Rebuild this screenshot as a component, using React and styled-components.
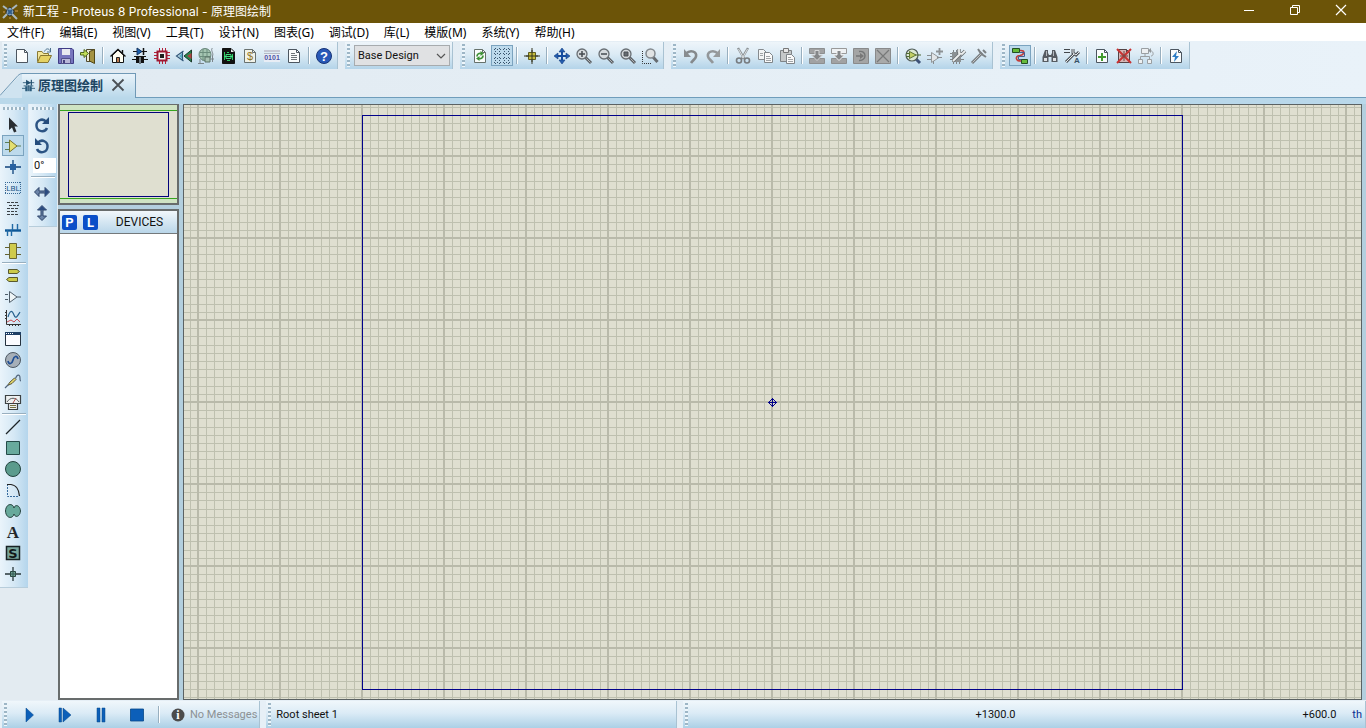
"use strict";

import React, {useState} from "react";
import styled, {createGlobalStyle, css} from "styled-components";

const uiFont = `Roboto, "Liberation Sans", "Noto Sans CJK SC", sans-serif`;
const cjkFont = `"Noto Sans", "Noto Sans CJK SC", sans-serif`;

const GlobalStyle = createGlobalStyle`
  * { box-sizing: border-box; }
  body {
    margin: 0;
    font-family: ${uiFont};
    font-size: 11px;
    color: #111;
  }
  button, input, select {
    font: inherit;
    color: inherit;
    margin: 0;
    padding: 0;
    border: 0;
    background: none;
  }
`;

/*************************************************************************/
// Icons, all on a 16 x 16 grid

const line = (d, stroke = "#222", w = 1, rest = {}) => (
    <path d={d} fill="none" stroke={stroke} strokeWidth={w} {...rest}/>
);
const shape = (d, fill, stroke = "none", w = 1) => (
    <path d={d} fill={fill} stroke={stroke} strokeWidth={w}/>
);
const page = (stroke = "#4c5660", fill = "#fafcfc") => (
    <>{shape("M2.5 1.5H10.500L13.500 4.500V14.500H2.500Z", fill, stroke)}{line("M10.500 1.500V4.500H13.500", stroke)}</>
);
const lens = (inner, glass = "#d6dbde") => (
    <>
        {line("M9.500 9.500L15 15", "#5b6065", 3)}
        {line("M10.500 10.500L14.500 14.500", "#b2b5b7", 1)}
        <circle cx="6" cy="6" r="5" fill={glass} stroke="#696f74" strokeWidth="1.3"/>
        {inner}
    </>
);

const icons = {
    logo: <>
        {shape("M5 5L8 3L12 7L11 11L7 12L4 9Z", "#8aa7bd", "#33393c")}
        {line("M1 2L5 5M15 1L10 5M1 14L5 10M10 10L15 15", "#aab9c0", 2)}
        {line("M6 10L10 6M6 6L10 10", "#315d8b", 2)}
        {line("M1 8H3M13 7H16M8 13V15", "#cf9a55", 1)}
    </>,
    schematicBlue: <>
        {line("M1 4.500H15M0 11.500H5M11 11.500H16M8 8V15M2 8.500H14", "#23506f", 1)}
        {shape("M5 1L11 4.500L5 8Z", "#23506f")}{line("M11.500 1V8", "#23506f", 1.5)}
        {shape("M4 9H7V15H4ZM9 9H12V15H9Z", "#2a5b7c")}
    </>,
    newFile: page(),
    open: <>
        {shape("M1.500 13.500V3.500H6L7.500 5.500H12.500V7.500", "#f3e69a", "#8a7a34")}
        {shape("M1.500 14.500L4.500 7.500H15.500L12 14.500Z", "#e5d264", "#857530")}
        {line("M8.500 3.500C10 0 13 0 14.500 3.500M14.500 0V4H11", "#50738e", 1)}
    </>,
    save: <>
        {shape("M0.500 0.500H14L15.500 2V15.500H0.500Z", "#7775be", "#403c86")}
        {shape("M4 1H12V7H4Z", "#e8e9f0")}{shape("M3.500 10.500H12.500V15.500H3.500Z", "#b8b7d8", "#514f8a")}
        {shape("M5 12H7V15H5Z", "#45427f")}
    </>,
    exit: <>
        {shape("M6.500 1.500H14.500V13.500H6.500Z", "#ecebd7", "#504b2f")}
        {shape("M9.500 3.500L14.500 1.500V15.500L9.500 13Z", "#a49343", "#514716")}
        {shape("M0.500 4.500H4V1.500L8.500 5.500L4 9.500V7H0.500Z", "#c2df59", "#4e681d")}
    </>,
    home: <>
        {shape("M2.500 7V14.500H13.500V7L8 2Z", "#fffef2", "#111")}
        {line("M0.500 8.500L8 1.500L15.500 8.500M12.500 2V5", "#111", 1.4)}
        {shape("M6.500 9.500H9.500V14.500H6.500Z", "#bc7b4f", "#222")}
    </>,
    schematic: <>
        {line("M1 3.500H15M0 11.500H5M11 11.500H16M2 8.500H14M8 8V16", "#151515", 1)}
        {shape("M5 0L10 3.500L5 7Z", "#175eb0", "#16345e")}{line("M11.500 0V7", "#111", 1.5)}
        {shape("M4 9H7V15H4ZM9 9H12V15H9Z", "#111")}
    </>,
    chip: <>
        {line("M0 4.500H16M0 7.500H16M0 10.500H16M5.500 0V16M8.500 0V16M11.500 0V16", "#b32239", 1)}
        {shape("M3.500 3.500H12.500V12.500H3.500Z", "#f4f4f4", "#9e1832", 2)}
        {shape("M6 6H10V10H6Z", "#1d1d1d")}
    </>,
    view3d: <>
        {shape("M8 8L15.500 2V14Z", "#27874e", "#1a3a2a")}
        {shape("M11 8L15.500 5V11Z", "#b04342")}
        {line("M7.500 3L0.500 8L7.500 13M6.500 4V12", "#32587a", 1.2)}
        {shape("M6 5V11L3 8Z", "#5aa9c4")}
    </>,
    gerber: <>
        <circle cx="7" cy="6.500" r="6" fill="#a4c5b1" stroke="#698579"/>
        {line("M2 4.500H13M2 8.500H13M5 1V13M9 1V13", "#6b8d7c", 1)}
        {line("M14.500 0C12 2 16 5 14.500 8V14M10.500 11H16M2 11V15M0 15.500H6", "#7b858b", 1)}
        {shape("M7 9H12V14H7Z", "#a8c3b3", "#5a7267")}
    </>,
    pcbDoc: <>
        {shape("M2.500 0.500H11L14.500 4V15.500H2.500Z", "#111", "#111")}
        {line("M4.500 4V12M7 4.500H9M12.500 6V12M7 12.500H10", "#2ecb64", 1)}
        {shape("M6 6.500H11V10.500H6Z", "#111", "#3be07c")}{line("M4 8.500H13", "#3be07c")}
        {shape("M11 1V4H14Z", "#eee")}
    </>,
    bill: <>{page("#69716f", "#f1f2e8")}
        <text x="5" y="12" fontSize="11" fill="#91741f" fontFamily="Liberation Sans, sans-serif">$</text></>,
    signals: <>
        {shape("M0 2H16V4H0Z", "#c6c9d5")}{shape("M0 5H16V14H0Z", "#e8edf5")}
        <text x="8" y="12" fontSize="7" fontWeight="bold" textAnchor="middle" fill="#4d51a3"
              fontFamily="Liberation Sans, sans-serif">0101</text>
        {line("M0 5.500H16", "#b5bac4")}
    </>,
    report: <>{page()}{line("M5 5.500H9M5 7.500H11M5 9.500H11M5 11.500H11", "#6d7479")}</>,
    help: <>
        <circle cx="8" cy="8" r="7.500" fill="#2858b7" stroke="#173477"/>
        <text x="8" y="13" fontSize="13" fontWeight="bold" textAnchor="middle" fill="#fff"
              fontFamily="Liberation Sans, sans-serif">?</text>
    </>,
    refresh: <>{page("#66716b")}
        {line("M5 8.500C5 6 7 5 9 5.500M11 7.500C11 10 9 11 7 10.500", "#3e9236", 1.8)}
        {shape("M8.500 3L12 5.500L8.500 8ZM7.500 8L4 10.500L7.500 13Z", "#3e9236")}</>,
    grid: line("M1.500 0V16M5.500 0V16M10.500 0V16M14.500 0V16M0 1.500H16M0 5.500H16M0 10.500H16M0 14.500H16",
        "#38536c", 1, {strokeDasharray: "1 2"}),
    origin: <>{line("M8 0V16M0 8H16", "#34351f", 1)}{shape("M4.500 4.500H11.500V11.500H4.500Z", "#c6bd3c", "#605e20")}
        {line("M8 2V14M2 8H14", "#34351f", 1)}</>,
    pan: <>
        {line("M8 2V14M2 8H14", "#164d9f", 2)}
        {shape("M8 0L11 4H5ZM8 16L5 12H11ZM0 8L4 5V11ZM16 8L12 11V5Z", "#245eb0", "#143e82", 0.6)}
    </>,
    zoomIn: lens(line("M3 6H9M6 3V9", "#454b50", 1.5)),
    zoomOut: lens(line("M3 6H9", "#454b50", 1.5)),
    zoomAll: lens(shape("M4 4H8V8H4Z", "#656b70", "#4c5155")),
    zoomArea: <>
        {line("M0.500 3V15.500H9", "#333", 1, {strokeDasharray: "1 1"})}
        {line("M11 9L15.500 14", "#666b70", 3)}
        <circle cx="8.500" cy="5.500" r="4.500" fill="#e0e3e4" stroke="#83898e" strokeWidth="1.5"/>
    </>,
    undo: <>{line("M3 5.500C8 1 14 4 13 8.500C12.500 11 10 12 8 15", "#85898c", 2.6)}{shape("M1 1V9H8Z", "#898d90")}</>,
    redo: <>{line("M13 5.500C8 1 2 4 3 8.500C3.500 11 6 12 8 15", "#93979a", 2.6)}{shape("M15 1V9H8Z", "#979b9d")}</>,
    cut: <>
        {line("M3 0L9.500 11M13 0L6.500 11", "#8b9195", 2.4)}
        {line("M3.500 1L8.500 10M12.500 1L7.500 10", "#eef1f2", 0.8)}
        <circle cx="4" cy="12.500" r="2.500" fill="none" stroke="#777c80" strokeWidth="1.600"/>
        <circle cx="12" cy="12.500" r="2.500" fill="none" stroke="#777c80" strokeWidth="1.600"/>
    </>,
    copy: <>
        {shape("M1.500 1.500H6.500L9.500 4.500V11.500H1.500Z", "#f3f5f5", "#868b8f")}
        {shape("M7.500 4.500H12.500L15.500 7.500V14.500H7.500Z", "#fafafa", "#7f8589")}
        {line("M3 5.500H6M3 7.500H6M9 8.500H13M9 10.500H14M9 12.500H14", "#a0a4a7")}
    </>,
    paste: <>
        {shape("M1.500 2.500H12.500V13.500H1.500Z", "#c5c8c9", "#7f8487")}{shape("M4.500 0.500H9.500V4.500H4.500Z", "#e8e8e8", "#777")}
        {shape("M7.500 6.500H12.500L15.500 9.500V15.500H7.500Z", "#fafafa", "#7f8589")}
        {line("M9 9.500H12M9 11.500H14M9 13.500H14", "#a0a4a7")}
    </>,
    blockCopy: <>{shape("M0.500 0.500H15.500V5.500H0.500ZM0.500 10.500H15.500V15.500H0.500Z", "#a1a2a3", "#8d8f90")}
        {shape("M6 2.500H10V7H13.500L8 12.500L2.500 7H6Z", "#858789", "#d6d8d9")}</>,
    blockMove: <>{shape("M0.500 0.500H15.500V5.500H0.500Z", "#eef1f3", "#999")}
        {shape("M0.500 10.500H15.500V15.500H0.500Z", "#a1a2a3", "#8d8f90")}
        {shape("M6 2.500H10V7H13.500L8 12.500L2.500 7H6Z", "#858789", "#f4f4f4")}</>,
    blockRotate: <>{shape("M0.500 0.500H15.500V15.500H0.500Z", "#a4a5a5", "#898a8b")}
        {line("M6 3.500C14 2 14 13 6 12.500M3 8H8", "#747677", 1.4)}{shape("M7 5L11 8L7 11Z", "#777")}</>,
    blockDelete: <>{shape("M0.500 0.500H15.500V15.500H0.500Z", "#a9aaaa", "#898a8b")}{line("M2 2L14 14M14 2L2 14", "#777979", 1.2)}</>,
    pick: <>
        {line("M10 10L15 15", "#3d5279", 3)}
        <circle cx="7" cy="7" r="6" fill="#dce8d2" stroke="#525d59" strokeWidth="1.2"/>
        {line("M1 5.500H5M1 8.500H5M10 7H16", "#4c6932")}{shape("M4.500 3.500L11 7L4.500 10.500Z", "#c2cf65", "#607533")}
    </>,
    make: <>{shape("M4.500 4.500L12 9.500L4.500 14.500Z", "#e2e5e7", "#92979a")}
        {line("M0 7.500H4M0 11.500H4M10 9.500H15M6.500 13V16", "#888d90")}{line("M12.500 0V7M9 3.500H16", "#8c9194", 1.8)}</>,
    packaging: <>
        {line("M1 5.500H13M1 8.500H13M1 11.500H15M4.500 2V16M7.500 2V16M10.500 2V16", "#808589")}
        {shape("M3 4H12V14H3Z", "#8b9194")}
        {line("M4 13L11 6M10 1V5L13 6L16 3", "#6d7275", 3.4)}{line("M4 13L11 6M10 1V5L13 6L16 3", "#ecefef", 1.8)}
    </>,
    decompose: <>{line("M1 15L11 5", "#777c7f", 3)}{line("M1.500 14.500L10 6", "#c0c3c5", 1)}
        {line("M7 1L9 4L12 7L15 9M12 2L15 5", "#7b8083", 2)}</>,
    wire: <>
        {line("M8 2.500C14 2 12 7 8 7.500C3 8 3 13 9 13", "#c43d39", 1.6)}
        {line("M8 4.500H12.500V8.500H6.500V11.500H10", "#465c91")}
        {shape("M0.500 0.500H7.500V4.500H0.500ZM9.500 11.500H15.500V15.500H9.500Z", "#66bb3c", "#244f25")}
    </>,
    search: <>
        {shape("M3 2H6V5L7 7H9L10 5V2H13L15.500 9V14H9.500V9H6.500V14H0.500V9Z", "#565b61")}
        {shape("M2 10H5V13H2ZM11 10H14V13H11Z", "#dfe2e5")}{line("M4.500 3V8M11.500 3V8", "#b3b8bd")}
    </>,
    property: <>
        {line("M0 1.500H6M0 4.500H6", "#43484c", 1.2)}
        {line("M2 14L10 6M9 1V5L12 7L15 4", "#51575c", 3)}{line("M2 14L10 6M9 1V5L12 7L15 4", "#e7ebee", 1)}
        <text x="10" y="15" fontSize="8" fontWeight="bold" fill="#355267" fontFamily="Liberation Sans, sans-serif">A</text>
    </>,
    addSheet: <>{page()}{line("M8 5V13M4 9H12", "#429b2d", 2)}</>,
    removeSheet: <>{page("#544345", "#d7b7b7")}{line("M1 1L15 15M15 1L1 15", "#c83232", 2)}{line("M8 3V13M4 8H12", "#744645")}</>,
    parentSheet: <>
        {shape("M3.500 0.500H10.500V5.500H3.500ZM0.500 11.500H4.500V15.500H0.500ZM9.500 11.500H13.500V15.500H9.500Z", "#edf0f2", "#9a9fa2")}
        {line("M7 6V8.500M2.500 11V8.500H11.500V11M12 2.500C16 3 16 8 13 8", "#9a9fa2")}{shape("M13 0V5L10 2.500Z", "#92979a")}
    </>,
    electrical: <>{page()}{shape("M9 3L4 9H7L6 14L11 8H8Z", "#2d7dc5")}</>,

    // mode toolbar
    select: shape("M4 0.500V13L7 10.500L9 15.500L11.500 14.500L9.500 9.500H13Z", "#292d31"),
    component: <>{line("M0 4.500H5M0 11.500H5M11 8H16", "#5a7d57")}{shape("M4.500 2L12 8L4.500 14Z", "#e3df70", "#77732e")}</>,
    junction: <>{line("M8 1V15M0 8H16", "#0f427b", 1.3)}{shape("M5 5H11V11H5Z", "#2761a1")}</>,
    label: <>
        {line("M0 2.500H16M0 13.500H16M0.500 2V14M15.500 2V14", "#376894", 1, {strokeDasharray: "1 1"})}
        <text x="8" y="11" fontSize="8" textAnchor="middle" fill="#1c568a"
              fontFamily="Roboto, sans-serif">LBL</text>
    </>,
    script: line("M2 1.500H14M4 4.500H14M2 7.500H14M2 10.500H12M2 13.500H14", "#3b4146", 1.2, {strokeDasharray: "3 1"}),
    bus: <>{line("M0 8.500H16", "#0d5797", 2.4)}{line("M2.500 8V14M6.500 8V14M7.500 2V8M12.500 2V8", "#216aa5", 1.4)}</>,
    subcircuit: <>{line("M0 4.500H5M0 11.500H5M11 4.500H16M11 11.500H16", "#646231")}{shape("M4.500 0.500H11.500V15.500H4.500Z", "#cfcb4c", "#696633")}</>,
    terminal: <>{shape("M3.500 1.500H12L14.500 3.500L12 5.500H3.500ZM4 9.500H12.500V13.500H4L1.500 11.500Z", "#cbca49", "#59592e")}</>,
    pin: <>{shape("M4.500 2.500L12 8L4.500 13.500Z", "#eff5f7", "#4e5d69")}{line("M0 5.500H3M0 10.500H3M12 8H16", "#4e5d69")}</>,
    graph: <>{line("M1.500 0V14.500H16M0 2.500H2M0 5.500H2M0 8.500H2M4.500 14V16M7.500 14V16M10.500 14V16M13.500 14V16", "#333")}
        {line("M3 7C5 0 7 0 9 5S13 5 15 2", "#27618d", 1.2)}{line("M2 12L6 10L9 12L12 9L15 12", "#c44d55")}</>,
    popup: <>{shape("M0.500 1.500H15.500V14.500H0.500Z", "#fbfbff", "#25313e")}{shape("M0 1H16V4H0Z", "#1f3f66")}
        {line("M1 2.500H9", "#fff", 1, {strokeDasharray: "1 1"})}</>,
    generator: <><circle cx="8" cy="8" r="7.500" fill="#a6afb8" stroke="#4e5963"/>
        {line("M3 9C4 13 7 12 8 8S12 3 13 7", "#204f95", 1.7)}</>,
    probe: <>{shape("M2.500 12.500L5 9L9.500 5L11 6.500L7 10.500Z", "#e4d76a", "#59573e")}
        {line("M0 15L3 12M10.500 5.500C12 1 15 1 15 5C15 7 15 8 16 8", "#50647b", 1.2)}</>,
    meter: <>{shape("M0.500 1.500H15.500V9.500H0.500ZM3.500 9.500H12.500V15.500H3.500Z", "#eef1f1", "#3c4143", 1.2)}
        {line("M2 8C5 3 11 3 14 8", "#54595b")}{line("M8 9L11 4", "#b04a42")}{line("M5 11.500H11M5 13.500H11", "#777140")}</>,
    line2d: line("M1 15L15 1", "#1d2427", 1.3),
    box2d: shape("M1.500 1.500H14.500V14.500H1.500Z", "#68aa9d", "#254b48"),
    circle2d: <circle cx="8" cy="8" r="7.500" fill="#5b9b8d" stroke="#23433e"/>,
    arc2d: <>{line("M2.500 2V14.500H14", "#386b9d", 1, {strokeDasharray: "2 1"})}{line("M2 2.500H6C11 3 14 8 14.500 14", "#222", 1.2)}</>,
    path2d: shape("M9 5C8 0 1 0 0.500 8C1 16 8 16 9 11C10 15 15 14 15.500 8C15 2 10 1 9 5Z", "#67a99b", "#26433e"),
    text2d: <text x="8" y="14" fontSize="17" fontWeight="bold" textAnchor="middle" fill="#23272a"
                  fontFamily="Liberation Serif, serif">A</text>,
    symbol: <>{shape("M1.500 1.500H14.500V14.500H1.500Z", "#78a69c", "#182123", 1.5)}
        <text x="8" y="13" fontSize="13" fontWeight="bold" textAnchor="middle" fill="#121719"
              fontFamily="DejaVu Sans, sans-serif">S</text></>,
    marker: <>{line("M8 1V15M0 8H16", "#28373a", 1.3)}{shape("M5.500 5.500H10.500V10.500H5.500Z", "#70a395", "#28443e")}
        {line("M8 5V11M5 8H11", "#355953")}</>,

    clockwise: <>{line("M12.500 5C8 0 2 4 2.500 9C3 15 11 16 13 11", "#2c5484", 2.5)}{shape("M8 7H15V0Z", "#254c7c")}</>,
    anticlockwise: <>{line("M3.500 5C8 0 14 4 13.500 9C13 15 5 16 3 11", "#2c5484", 2.5)}{shape("M8 7H1V0Z", "#254c7c")}</>,
    flipX: <>{shape("M0.500 8L5 3.500V7H11V3.500L15.500 8L11 12.500V9H5V12.500Z", "#6b84a8", "#2c4268")}
        {shape("M11 4L15 8L11 12Z", "#2c4c80")}</>,
    flipY: <>{shape("M8 0.500L12.500 5H9V11H12.500L8 15.500L3.500 11H7V5H3.500Z", "#6b84a8", "#2c4268")}
        {shape("M8 1L12 5H4Z", "#2c4c80")}</>,

    play: shape("M5 1L12.500 8L5 15Z", "#0c5fb9", "#064888", 0.5),
    step: shape("M2 1H4.500V15H2ZM6 1L14 8L6 15Z", "#0c5fb9", "#064888", 0.5),
    pause: shape("M4 1H7V15H4ZM9 1H12V15H9Z", "#0c5fb9", "#064888", 0.5),
    stop: shape("M1.500 2H14.500V14H1.500Z", "#0c5fb9", "#064888", 0.8),
    info: <><circle cx="8" cy="8" r="6.500" fill="#4c4c4c"/>
        <text x="8" y="12" fontSize="12" fontWeight="bold" textAnchor="middle" fill="#fff"
              fontFamily="Liberation Serif, serif">i</text></>,
    minimize: line("M3 8.500H13", "#fff"),
    restore: line("M3.500 5.500H10.500V12.500H3.500ZM5.500 5V3.500H12.500V10.500H11", "#fff"),
    close: line("M3 3L13 13M13 3L3 13", "#fff", 1.2),
    closeTab: line("M2.500 2.500L13.500 13.500M13.500 2.500L2.500 13.500", "#4b5156", 1.8)
};

const IconSvg = styled.svg`
  display: block;
  width: ${props => props.$size}px;
  height: ${props => props.$size}px;
  flex: none;
  overflow: visible;
`;

const Icon = ({name, size = 16}) => (
    <IconSvg viewBox="0 0 16 16" $size={size} aria-hidden="true">{icons[name]}</IconSvg>
);

/*************************************************************************/

const Window = styled.div`
  display: flex;
  flex-direction: column;
  height: 100vh;
  overflow: hidden;
  background: #e3ebf1;
`;

const TitleBar = styled.header`
  display: flex;
  align-items: center;
  height: 23px;
  padding-left: 2px;
  gap: 5px;
  background: #6c5408;
  color: #fff;
  font-family: Inter, "Noto Sans CJK SC", sans-serif;
`;

const Title = styled.h1`
  flex: 1;
  margin: 0;
  font-size: 12px;
  font-weight: 400;
  line-height: 22px;
`;

const WindowButton = styled.button`
  display: flex;
  align-items: center;
  justify-content: center;
  width: 46px;
  height: 20px;
`;

const WindowButtons = styled.div`
  display: flex;
  align-self: flex-start;
  padding-right: 2px;
`;

const MenuBar = styled.nav`
  display: flex;
  height: 18px;
  padding-left: 7px;
  gap: 15px;
  background: #fff;
  font-family: ${cjkFont};
  font-size: 12px;
`;

const MenuItem = styled.button`
  line-height: 18px;
  padding-top: 1px;
  white-space: nowrap;
  color: #000;
`;

const ToolRow = styled.div`
  display: flex;
  gap: 7px;
  height: 32px;
  padding: 1px 2px 4px;
  background: linear-gradient(90deg, #e1eaf1, #e9f2f9);
`;

const Toolbar = styled.div`
  display: flex;
  align-items: center;
  padding-right: 2px;
  border-right: 1px solid #a9c2d2;
  background: linear-gradient(#eef5fa, #dcebf5 45%, #b4d4e9);
`;

const Grip = styled.span`
  flex: none;
  ${props => props.across ? css`
    height: 3px;
    margin: 3px 3px 4px;
    background: repeating-linear-gradient(90deg, #9db6c6 0 2px, #eef6fb 2px 4px);
  ` : css`
    width: 3px;
    height: 23px;
    margin: 0 4px 0 2px;
    background: repeating-linear-gradient(#9db6c6 0 2px, #eef6fb 2px 4px);
  `}
`;

const ToolButton = styled.button`
  display: flex;
  align-items: center;
  justify-content: center;
  flex: none;
  width: 22px;
  height: 21px;
  ${props => props.$active && css`
    border: 1px solid #7ba3bf;
    background: #bddaec;
  `}
`;

const Divider = styled.span`
  flex: none;
  ${props => props.across ? css`
    height: 2px;
    margin: ${props.$space}px 2px;
    border-top: 1px solid #98afbf;
    background: #fff;
  ` : css`
    width: 2px;
    height: 17px;
    margin: 0 3px;
    border-left: 1px solid #98afbf;
    background: #fff;
  `}
`;

const DesignBox = styled.div`
  position: relative;
  display: flex;
`;

const DesignSelect = styled.select`
  appearance: none;
  width: 96px;
  height: 21px;
  padding-left: 3px;
  border: 1px solid #a7abae;
  border-radius: 0;
  background: #e0e1e3;
  color: #111;
`;

const Chevron = styled.svg`
  position: absolute;
  right: 4px;
  top: 7px;
  width: 10px;
  height: 8px;
  pointer-events: none;
`;

const TabRow = styled.div`
  display: flex;
  height: 31px;
  border-bottom: 6px solid #b9d8ea;
  background: linear-gradient(90deg, #e1eaf1, #e9f2f9);
`;

const TabEdge = styled.svg`
  display: block;
  width: 22px;
  height: 25px;
`;

const Tab = styled.div`
  display: flex;
  align-items: center;
  gap: 7px;
  padding: 0 9px 2px 0;
  border-top: 1px solid #7099b6;
  border-right: 1px solid #7099b6;
  background: linear-gradient(#e9f3fa, #b9d8ea);
`;

const TabLabel = styled.button`
  display: flex;
  align-items: center;
  gap: 3px;
  color: #1d4663;
  font-family: ${cjkFont};
  font-size: 13px;
  line-height: 20px;
  font-weight: 700;
`;

const TabClose = styled.button`
  display: flex;
`;

const TabLine = styled.div`
  flex: 1;
  border-bottom: 1px solid #6f9dbb;
`;

const Main = styled.main`
  display: flex;
  flex: 1;
  min-height: 0;
`;

const SideBar = styled.div`
  display: flex;
  flex-direction: column;
  align-self: flex-start;
  align-items: stretch;
  flex: none;
  width: 28px;
  margin-right: 1px;
  padding-bottom: 3px;
  border-bottom: 1px solid #b7cddb;
  background: linear-gradient(90deg, #eaf4fb, #d5e8f5 50%, #b4d5ec);

  ${ToolButton} {
    margin-left: 2px;
  }
`;

const AngleInput = styled.input`
  width: 23px;
  height: 15px;
  margin: 2px 0 0 4px;
  padding-left: 1px;
  background: #fff;
`;

const SidePanel = styled.aside`
  display: flex;
  flex-direction: column;
  flex: none;
  width: 121px;
  gap: 4px;
`;

const Overview = styled.div`
  padding: 5px 0 4px;
  height: 101px;
  border: 2px solid #686c6c;
  border-top-width: 1px;
  background: #cfe3c3;
`;

const OverviewArea = styled.div`
  height: 100%;
  padding: 1px 8px;
  border: solid #36a51f;
  border-width: 1px 0;
  background: #dfdfd0;
`;

const OverviewSheet = styled.div`
  height: 100%;
  border: 1px solid #02027a;
`;

const Devices = styled.section`
  display: flex;
  flex-direction: column;
  flex: 1;
  border: 2px solid #686c6c;
  background: #fff;
`;

const DevicesHead = styled.div`
  display: flex;
  align-items: center;
  height: 23px;
  padding: 0 2px;
  gap: 6px;
  border-bottom: 1px solid #74797b;
  background: linear-gradient(#f1f7fb, #b9d6e9);
`;

const LetterButton = styled.button`
  width: 15px;
  height: 15px;
  border-radius: 2px;
  background: #0a4fc8;
  color: #fff;
  font-size: 13px;
  font-weight: 700;
  line-height: 15px;
`;

const DevicesTitle = styled.h2`
  flex: 1;
  margin: 0;
  font-size: 12px;
  font-weight: 400;
  text-align: center;
`;

const Editor = styled.div`
  flex: 1;
  min-width: 0;
  margin-left: 4px;
  border: 1px solid #5b6263;
  background: #dfdfd0;
`;

const Frame = styled.div`
  display: flex;
  flex: 1;
  min-width: 0;
  padding-right: 4px;
  background: #b3cfde;
`;

const Sheet = styled.svg`
  display: block;
  width: 100%;
  height: 100%;
`;

const StatusRow = styled.footer`
  display: flex;
  gap: 6px;
  height: 28px;
  padding: 1px 0 0 2px;
  background: #e6eff6;
`;

const StatusPart = styled.div`
  display: flex;
  align-items: center;
  flex: ${props => props.$grow || "none"};
  border-right: 1px solid #a9c2d2;
  background: linear-gradient(#f0f7fb, #dbebf6 45%, #acd0e6);
`;

const RunButton = styled.button`
  display: flex;
  align-items: center;
  justify-content: center;
  width: 36px;
  height: 24px;
`;

const Messages = styled.span`
  display: flex;
  align-items: center;
  gap: 4px;
  padding: 0 2px 0 7px;
  color: #8c9194;
`;

const SheetName = styled.span`
  padding-left: 1px;
`;

const Coord = styled.span`
  flex: ${props => props.$grow} 1 0;
  padding-right: 16px;
  text-align: right;
`;

const Unit = styled.span`
  padding-right: 3px;
  color: #0b2f92;
`;

/*************************************************************************/

const menus = ["文件(F)", "编辑(E)", "视图(V)", "工具(T)", "设计(N)", "图表(G)", "调试(D)", "库(L)", "模版(M)", "系统(Y)", "帮助(H)"];

const fileTools = ["newFile", "open", "save", "exit", "|", "home", "schematic", "chip", "view3d", "gerber", "pcbDoc",
    "bill", "signals", "report", "|", "help"];
const viewTools = ["refresh", "grid", "|", "origin", "|", "pan", "zoomIn", "zoomOut", "zoomAll", "zoomArea"];
const editTools = ["undo", "redo", "|", "cut", "copy", "paste", "|", "blockCopy", "blockMove", "blockRotate",
    "blockDelete", "|", "pick", "make", "packaging", "decompose"];
const designTools = ["wire", "|", "search", "property", "|", "addSheet", "removeSheet", "parentSheet", "|", "electrical"];
const modes = ["select", "component", "junction", "label", "script", "bus", "subcircuit", "|", "terminal", "pin", "graph",
    "popup", "generator", "probe", "meter", "|", "line2d", "box2d", "circle2d", "arc2d", "path2d", "text2d", "symbol", "marker"];

const Tools = ({names, active, onPick, across}) => names.map((name, i) => (
    name === "|"
        ? <Divider key={i} across={across ? 1 : undefined} $space={1}/>
        : <ToolButton key={i} type="button" aria-label={name} $active={name === active}
                      onClick={() => onPick && onPick(name)}><Icon name={name}/></ToolButton>
));

// Grid squares are 8.2px, with a heavy line on every tenth one
const steps = Array.from({length: 401}, (_, i) => i - 200);

const Grid = () => {
    const minor = steps.filter(k => k % 10).map(k => Math.round(k * 8.2));
    const major = steps.filter(k => k % 10 === 0).map(k => Math.round(k * 8.2));
    const toPath = (list, dx, dy) => list.map(p => `M${p + dx} -1640V1640M-1640 ${p + dy}H1640`).join("");
    return (
        <Sheet role="img" aria-label="Schematic sheet">
            <svg x="50%" y="50%" overflow="visible">
                <path d={toPath(minor, 0, 0.5)} stroke="#bec0af"/>
                <path d={toPath(major, -0.5, 0)} stroke="#b9baaa" strokeWidth="2"/>
                <rect x="-410" y="-286.5" width="820" height="574" fill="none" stroke="#02028a"/>
                <path d="M0 -3.5L4 0.5L0 4.5L-4 0.5ZM0 -4V5M-4.5 0.5H4.5" fill="none" stroke="#02028a"/>
            </svg>
        </Sheet>
    );
};

export default function App() {
    const [mode, setMode] = useState("component");
    const [angle, setAngle] = useState("0°");

    return (
        <Window>
            <GlobalStyle/>
            <TitleBar>
                <Icon name="logo"/>
                <Title>新工程 - Proteus 8 Professional - 原理图绘制</Title>
                <WindowButtons>
                    {["minimize", "restore", "close"].map(name => (
                        <WindowButton key={name} type="button" aria-label={name}><Icon name={name}/></WindowButton>
                    ))}
                </WindowButtons>
            </TitleBar>
            <MenuBar>
                {menus.map(menu => <MenuItem key={menu} type="button">{menu}</MenuItem>)}
            </MenuBar>
            <ToolRow>
                <Toolbar><Grip/><Tools names={fileTools}/></Toolbar>
                <Toolbar>
                    <Grip/>
                    <DesignBox>
                        <DesignSelect aria-label="Design variant"><option>Base Design</option></DesignSelect>
                        <Chevron viewBox="0 0 10 8">{line("M1 2L5 6L9 2", "#555", 1.2)}</Chevron>
                    </DesignBox>
                </Toolbar>
                <Toolbar><Grip/><Tools names={viewTools} active="grid"/></Toolbar>
                <Toolbar><Grip/><Tools names={editTools}/></Toolbar>
                <Toolbar><Grip/><Tools names={designTools} active="wire"/></Toolbar>
            </ToolRow>
            <TabRow>
                <TabEdge viewBox="0 0 22 25">
                    {shape("M0 25V23L22 0V25Z", "#cfe3f0")}
                    {line("M0 22.500L18 2.500Q20 0.500 22 0.500", "#7099b6")}
                </TabEdge>
                <Tab>
                    <TabLabel type="button"><Icon name="schematicBlue" size={13}/>原理图绘制</TabLabel>
                    <TabClose type="button" aria-label="Close tab"><Icon name="closeTab"/></TabClose>
                </Tab>
                <TabLine/>
            </TabRow>
            <Main>
                <SideBar>
                    <Grip across={1}/>
                    <Tools names={modes} active={mode} onPick={setMode} across/>
                </SideBar>
                <SideBar>
                    <Grip across={1}/>
                    <Tools names={["clockwise", "anticlockwise"]}/>
                    <AngleInput aria-label="Angle" value={angle} onChange={e => setAngle(e.target.value)}/>
                    <Divider across={1} $space={3}/>
                    <Tools names={["flipX", "flipY"]}/>
                </SideBar>
                <Frame>
                    <SidePanel>
                        <Overview><OverviewArea><OverviewSheet/></OverviewArea></Overview>
                        <Devices>
                            <DevicesHead>
                                <LetterButton type="button">P</LetterButton>
                                <LetterButton type="button">L</LetterButton>
                                <DevicesTitle>DEVICES</DevicesTitle>
                            </DevicesHead>
                        </Devices>
                    </SidePanel>
                    <Editor><Grid/></Editor>
                </Frame>
            </Main>
            <StatusRow>
                <StatusPart>
                    <Grip/>
                    {["play", "step", "pause", "stop"].map(name => (
                        <RunButton key={name} type="button" aria-label={name}><Icon name={name}/></RunButton>
                    ))}
                    <Divider/>
                    <Messages><Icon name="info"/>No Messages</Messages>
                </StatusPart>
                <StatusPart $grow="3 1 0"><Grip/><SheetName>Root sheet 1</SheetName></StatusPart>
                <StatusPart $grow="5 1 0">
                    <Grip/>
                    <Coord $grow={17}>+1300.0</Coord>
                    <Coord $grow={16}>+600.0</Coord>
                    <Unit>th</Unit>
                </StatusPart>
            </StatusRow>
        </Window>
    );
}
